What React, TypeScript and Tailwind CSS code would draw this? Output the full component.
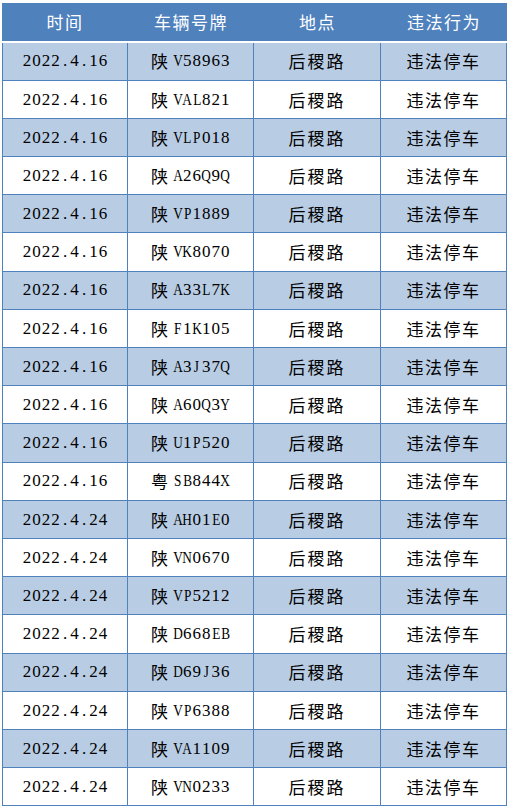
import React from 'react';

type Row = { date: string; prov: string; plate: string };

const rows: Row[] = [
  { date: '2022.4.16', prov: '陕', plate: 'V58963' },
  { date: '2022.4.16', prov: '陕', plate: 'VAL821' },
  { date: '2022.4.16', prov: '陕', plate: 'VLP018' },
  { date: '2022.4.16', prov: '陕', plate: 'A26Q9Q' },
  { date: '2022.4.16', prov: '陕', plate: 'VP1889' },
  { date: '2022.4.16', prov: '陕', plate: 'VK8070' },
  { date: '2022.4.16', prov: '陕', plate: 'A33L7K' },
  { date: '2022.4.16', prov: '陕', plate: 'F1K105' },
  { date: '2022.4.16', prov: '陕', plate: 'A3J37Q' },
  { date: '2022.4.16', prov: '陕', plate: 'A60Q3Y' },
  { date: '2022.4.16', prov: '陕', plate: 'U1P520' },
  { date: '2022.4.16', prov: '粤', plate: 'SB844X' },
  { date: '2022.4.24', prov: '陕', plate: 'AH01E0' },
  { date: '2022.4.24', prov: '陕', plate: 'VN0670' },
  { date: '2022.4.24', prov: '陕', plate: 'VP5212' },
  { date: '2022.4.24', prov: '陕', plate: 'D668EB' },
  { date: '2022.4.24', prov: '陕', plate: 'D69J36' },
  { date: '2022.4.24', prov: '陕', plate: 'VP6388' },
  { date: '2022.4.24', prov: '陕', plate: 'VA1109' },
  { date: '2022.4.24', prov: '陕', plate: 'VN0233' },
];

const serif = "font-['Liberation_Serif','Noto_Sans_CJK_SC',serif]";
const cjk = "font-['Noto_Sans_CJK_SC',sans-serif]";

// half-width cells, like the fixed-pitch digits in the sheet
function Fixed({ text }: { text: string }) {
  return (
    <span className="inline-flex">
      {text.split('').map((c, i) => (
        <span key={i} className="inline-flex w-[9.5px] justify-center overflow-visible">
          <span className={/[A-Z]/.test(c) ? 'inline-block scale-x-[0.78]' : 'inline-block'}>{c}</span>
        </span>
      ))}
    </span>
  );
}

export default function App() {
  return (
    <div className="w-[510px] h-[810px] bg-white pt-[3px] pl-[2px]">
      <div className="w-[505px]">
        {/* Header */}
        <div
          className={`grid grid-cols-[126px_126px_127px_126px] h-[39.5px] bg-[#4f81bd] border-b-2 border-white text-white text-[17px] tracking-[1.5px] ${cjk}`}
        >
          {['时间', '车辆号牌', '地点', '违法行为'].map((h) => (
            <div key={h} className="flex items-center justify-center">
              {h}
            </div>
          ))}
        </div>

        {/* Body */}
        <div className="border-x border-[#4f81bd]">
          {rows.map((r, i) => (
            <div
              key={i}
              className={`grid grid-cols-[125px_126px_127px_125px] h-[38.2px] border-b border-[#4f81bd] text-black ${
                i % 2 === 0 ? 'bg-[#b8cce4]' : 'bg-white'
              }`}
            >
              <div className={`flex items-center justify-center border-r border-[#4f81bd] text-[17px] ${serif}`}>
                <Fixed text={r.date} />
              </div>
              <div className={`flex items-center justify-center border-r border-[#4f81bd] text-[17px] ${serif}`}>
                <span className={`${cjk} text-[17px] mr-[5px]`}>{r.prov}</span>
                <Fixed text={r.plate} />
              </div>
              <div className={`flex items-center justify-center border-r border-[#4f81bd] text-[17px] tracking-[2px] ${cjk}`}>
                后稷路
              </div>
              <div className={`flex items-center justify-center text-[17px] tracking-[1.5px] ${cjk}`}>
                违法停车
              </div>
            </div>
          ))}
        </div>
      </div>
    </div>
  );
}
